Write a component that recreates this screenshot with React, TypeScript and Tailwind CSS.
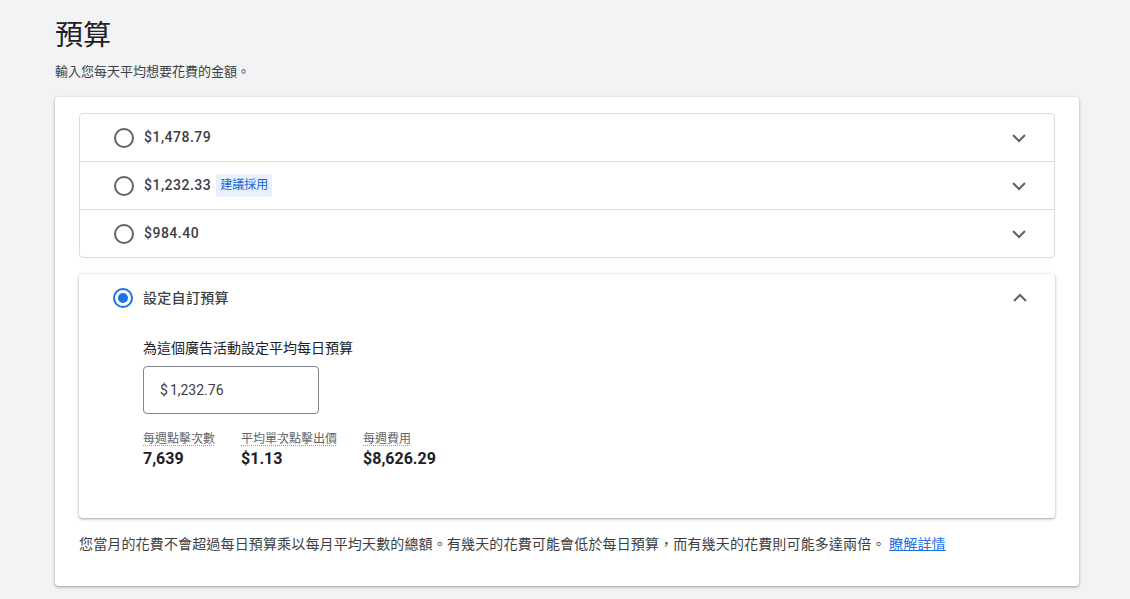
import React, { useState } from 'react';

const font = { fontFamily: 'Roboto, "Noto Sans CJK TC", "Noto Sans", sans-serif' };

const options = [
  { id: 'a', amount: '$1,478.79' },
  { id: 'b', amount: '$1,232.33', badge: '建議採用' },
  { id: 'c', amount: '$984.40' },
];

const Chevron = ({ up }: { up?: boolean }) => (
  <svg width="24" height="24" viewBox="0 0 24 24" className="text-[#5f6368]">
    <path
      d={up ? 'M6 15l6-6 6 6' : 'M6 9l6 6 6-6'}
      fill="none"
      stroke="currentColor"
      strokeWidth="2"
    />
  </svg>
);

const Radio = ({ checked }: { checked?: boolean }) =>
  checked ? (
    <span className="flex h-5 w-5 items-center justify-center rounded-full border-2 border-[#1a73e8]">
      <span className="h-2.5 w-2.5 rounded-full bg-[#1a73e8]" />
    </span>
  ) : (
    <span className="h-5 w-5 rounded-full border-2 border-[#5f6368]" />
  );

const Stat = ({ label, value }: { label: string; value: string }) => (
  <div className="flex flex-col whitespace-nowrap">
    <span className="text-[12px] leading-[18px] text-[#5f6368] underline decoration-dotted decoration-[#9aa0a6] underline-offset-2">
      {label}
    </span>
    <span className="text-[16px] leading-[22px] font-bold text-[#202124]">{value}</span>
  </div>
);

export default function App() {
  const [budget, setBudget] = useState('1,232.76');

  return (
    <div className="min-h-[599px] bg-[#f1f3f4] px-[55px] pt-[18px]" style={font}>
      <h1 className="text-[28px] leading-[36px] text-[#202124]">預算</h1>
      <p className="mt-[8px] text-[13px] leading-[20px] text-[#3c4043]">輸入您每天平均想要花費的金額。</p>

      <div className="mt-[15px] w-[1024px] rounded-[4px] bg-white px-[24px] pt-[16px] pb-[32px] shadow-[0_1px_2px_rgba(60,64,67,0.3),0_1px_3px_1px_rgba(60,64,67,0.15)]">
        <div className="flex flex-col">
          {options.map((o, i) => (
            <div
              key={o.id}
              className={
                'flex h-[49px] items-center border border-[#dadce0] pl-[34px] pr-[23px] ' +
                (i === 0 ? 'rounded-t-[4px] ' : '-mt-px ') +
                (i === options.length - 1 ? 'rounded-b-[4px]' : '')
              }
            >
              <Radio />
              <span className="ml-[10px] text-[14px] font-medium tracking-[0.5px] text-[#3c4043]">{o.amount}</span>
              {o.badge && (
                <span className="ml-[5px] rounded-[2px] bg-[#e8f0fe] px-[4px] py-[3px] text-[12px] leading-[17px] text-[#1967d2]">
                  {o.badge}
                </span>
              )}
              <span className="ml-auto">
                <Chevron />
              </span>
            </div>
          ))}
        </div>

        <div className="mt-[16px] h-[244px] rounded-[4px] bg-white shadow-[0_1px_2px_rgba(60,64,67,0.3),0_1px_3px_1px_rgba(60,64,67,0.15)]">
          <div className="flex h-[48px] items-center pl-[34px] pr-[23px]">
            <Radio checked />
            <span className="ml-[10px] text-[14px] font-medium tracking-[0.3px] text-[#3c4043]">設定自訂預算</span>
            <span className="ml-auto">
              <Chevron up />
            </span>
          </div>
          <div className="pl-[64px] pt-[16px]">
            <p className="text-[14px] leading-[20px] text-[#202124]">為這個廣告活動設定平均每日預算</p>
            <label className="mt-[8px] flex h-[48px] w-[176px] items-center rounded-[4px] border border-[#80868b] px-[16px] text-[14px] text-[#3c4043]">
              <span className="mr-[2px]">$</span>
              <input
                value={budget}
                onChange={(e) => setBudget(e.target.value)}
                className="w-full bg-transparent outline-none"
              />
            </label>
            <div className="mt-[16px] flex gap-[26px]">
              <Stat label="每週點擊次數" value="7,639" />
              <Stat label="平均單次點擊出價" value="$1.13" />
              <Stat label="每週費用" value="$8,626.29" />
            </div>
          </div>
        </div>

        <p className="mt-[16px] text-[14px] leading-[20px] tracking-[0.15px] text-[#3c4043]">
          您當月的花費不會超過每日預算乘以每月平均天數的總額。有幾天的花費可能會低於每日預算，而有幾天的花費則可能多達兩倍。{' '}
          <a href="#" className="text-[#1a73e8] underline">
            瞭解詳情
          </a>
        </p>
      </div>
    </div>
  );
}
